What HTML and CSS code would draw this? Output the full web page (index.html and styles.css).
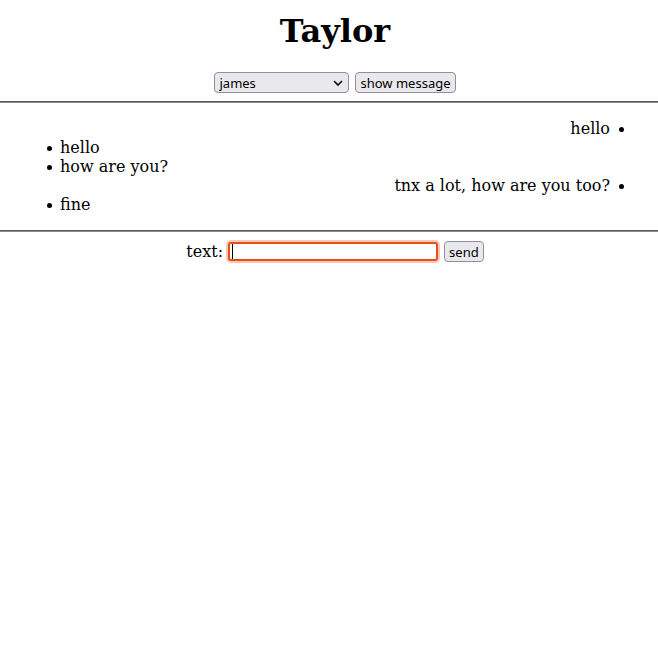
FILE: index.html
```html
<!DOCTYPE html>
<html>
<head>
<meta charset="utf-8">
<link rel="stylesheet" href="styles.css">
</head>
<body>
<h1 class="title">Taylor</h1>
<div class="picker">
  <select class="ctl select"><option>james</option></select>
  <button class="ctl btn">show message</button>
</div>
<div class="rule"></div>
<ul class="chat">
  <li class="mine">hello</li>
  <li class="theirs">hello</li>
  <li class="theirs">how are you?</li>
  <li class="mine">tnx a lot, how are you too?</li>
  <li class="theirs">fine</li>
</ul>
<div class="rule"></div>
<form class="composer">
  <label class="lbl">text:</label>
  <input class="field" type="text">
  <button class="ctl btn" type="button">send</button>
</form>
</body>
</html>
```
FILE: styles.css
```css
html, body { background: #fff; }
body {
  margin: 8px 0;
  font-family: "DejaVu Serif", serif;
  font-size: 16px;
  color: #000;
}
.title {
  text-align: center;
  font-size: 32px;
  font-weight: bold;
  margin: 4px 0 21px;
  padding: 0 8px 0 20px;
}
.picker {
  display: flex;
  justify-content: center;
  gap: 6px;
  padding: 1px 8px 0 20px;
}
.ctl {
  font-family: "Noto Sans", sans-serif;
  font-size: 13px;
  color: #000;
  background: #e9e9ed;
  border: 1px solid #8f8f9d;
  border-radius: 4px;
  height: 21px;
  box-sizing: border-box;
  margin: 0;
  padding: 0 4px;
}
.select {
  width: 135px;
  appearance: none;
  padding-left: 4px;
  text-align: left;
  background-image: url("data:image/svg+xml;utf8,<svg xmlns='http://www.w3.org/2000/svg' width='10' height='6'><path d='M1 1 L5 5 L9 1' fill='none' stroke='black' stroke-width='1.6'/></svg>");
  background-repeat: no-repeat;
  background-position: right 5px center;
}
.btn { padding: 0 4px; }
.rule {
  height: 1px;
  border-top: 1px solid #5a5a5a;
  background: #8a8a8a;
  margin: 8px 0;
}
.chat {
  margin: 16px 0;
  padding: 0 48px 0 60px;
  list-style: none;
}
.chat li { line-height: 19px; }
.theirs::before {
  content: "";
  display: inline-block;
  width: 5px;
  height: 5px;
  border-radius: 50%;
  background: #000;
  margin: 0 8px 0 -13px;
  vertical-align: middle;
}
.mine { text-align: right; }
.mine::after {
  content: "";
  display: inline-block;
  width: 5px;
  height: 5px;
  border-radius: 50%;
  background: #000;
  margin: 0 -14px 0 9px;
  vertical-align: middle;
}
.composer {
  display: flex;
  justify-content: center;
  align-items: center;
  gap: 4px;
  margin: 0;
  padding: 0 8px 0 20px;
}
.lbl { line-height: 19px; padding-bottom: 1px; }
.field {
  width: 210px;
  height: 19px;
  box-sizing: border-box;
  border: 2px solid #e4501e;
  border-radius: 3px;
  box-shadow: 0 0 0 2px #fcc8b4;
  outline: none;
  margin: 2px 2px 2px 1px;
  padding: 0 3px;
  font-family: "Noto Sans", sans-serif;
  font-size: 13px;
  background: #fff linear-gradient(#000, #000) no-repeat 2px center / 1px 15px;
}
```
